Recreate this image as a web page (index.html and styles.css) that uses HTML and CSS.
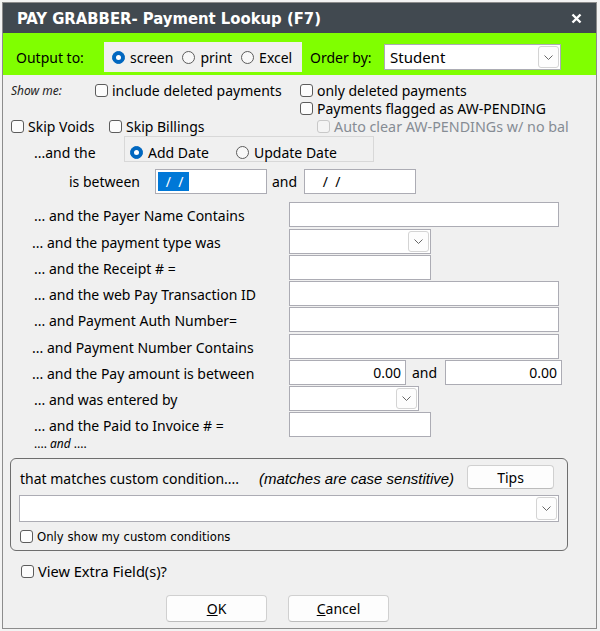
FILE: index.html
```html
<!DOCTYPE html>
<html lang="en">

<head>
    <meta charset="UTF-8">
    <title>Payment Lookup</title>
    <link rel="stylesheet" href="styles.css">
</head>

<body>
    <div class="window">
        <div class="titlebar">
            <span class="title">PAY GRABBER- Payment Lookup (F7)</span>
            <svg class="close" width="11" height="11" viewBox="0 0 11 11">
                <path d="M1.5 1.5l8 8M9.5 1.5l-8 8" stroke="#fff" stroke-width="2.4" />
            </svg>
        </div>

        <div class="greenbar">
            <span class="g-label output-label">Output to:</span>
            <div class="radio-box">
                <label class="radio checked"><span class="dot"></span>screen</label>
                <label class="radio"><span class="dot"></span>print</label>
                <label class="radio"><span class="dot"></span>Excel</label>
            </div>
            <span class="g-label order-label">Order by:</span>
            <div class="select order-select">
                <span class="sel-text">Student</span>
                <span class="dd"><svg width="9" height="5" viewBox="0 0 9 5"><path d="M0.5 0.5l4 4 4-4" fill="none" stroke="#666" /></svg></span>
            </div>
        </div>

        <div class="content">
            <div class="show-grid">
                <div class="show-cell">
                    <span class="show-me">Show me:</span>
                    <label class="chk"><span class="box"></span>include deleted payments</label>
                </div>
                <label class="chk"><span class="box"></span>only deleted payments</label>
                <div></div>
                <label class="chk"><span class="box"></span>Payments flagged as AW-PENDING</label>
                <div class="show-cell">
                    <label class="chk skip-voids"><span class="box"></span>Skip Voids</label>
                    <label class="chk"><span class="box"></span>Skip Billings</label>
                </div>
                <label class="chk disabled indent"><span class="box"></span>Auto clear AW-PENDINGs w/ no bal</label>
            </div>

            <div class="date-type-row">
                <span class="date-label">...and the</span>
                <div class="date-group">
                    <label class="radio checked add-date"><span class="dot"></span>Add Date</label>
                    <label class="radio"><span class="dot"></span>Update Date</label>
                </div>
            </div>

            <div class="between-row">
                <span class="between-label">is between</span>
                <div class="inp date-inp"><span class="selected">&nbsp;/&nbsp;&nbsp;/&nbsp;</span></div>
                <span class="and">and</span>
                <div class="inp date-inp"><span class="date-blank">&nbsp;/&nbsp;&nbsp;/</span></div>
            </div>

            <div class="fields">
                <div class="frow">
                    <span class="flabel">... and the Payer Name Contains</span>
                    <div class="inp long"></div>
                </div>
                <div class="frow plus1">
                    <span class="flabel tight">... and the payment type was</span>
                    <div class="select short">
                        <span class="sel-text"></span>
                        <span class="dd"><svg width="9" height="5" viewBox="0 0 9 5"><path d="M0.5 0.5l4 4 4-4" fill="none" stroke="#666" /></svg></span>
                    </div>
                </div>
                <div class="frow">
                    <span class="flabel">... and the Receipt # =</span>
                    <div class="inp short"></div>
                </div>
                <div class="frow">
                    <span class="flabel">... and the web Pay Transaction ID</span>
                    <div class="inp long"></div>
                </div>
                <div class="frow">
                    <span class="flabel">... and Payment Auth Number=</span>
                    <div class="inp long"></div>
                </div>
                <div class="frow plus1">
                    <span class="flabel tight">... and Payment Number Contains</span>
                    <div class="inp long"></div>
                </div>
                <div class="frow">
                    <span class="flabel tight">... and the Pay amount is between</span>
                    <div class="inp amount">0.00</div>
                    <span class="and amount-and">and</span>
                    <div class="inp amount">0.00</div>
                </div>
                <div class="frow">
                    <span class="flabel">... and was entered by</span>
                    <div class="select entered">
                        <span class="sel-text"></span>
                        <span class="dd"><svg width="9" height="5" viewBox="0 0 9 5"><path d="M0.5 0.5l4 4 4-4" fill="none" stroke="#666" /></svg></span>
                    </div>
                </div>
                <div class="frow">
                    <span class="flabel">... and the Paid to Invoice # =</span>
                    <div class="inp short"></div>
                </div>
                <div class="and-line">.... <em>and</em> ....</div>
            </div>

            <div class="custom-box">
                <div class="custom-head">
                    <span class="custom-title">that matches custom condition....</span>
                    <em class="custom-note">(matches are case senstitive)</em>
                    <button class="btn tips">Tips</button>
                </div>
                <div class="select custom-select">
                    <span class="sel-text"></span>
                    <span class="dd"><svg width="9" height="5" viewBox="0 0 9 5"><path d="M0.5 0.5l4 4 4-4" fill="none" stroke="#666" /></svg></span>
                </div>
                <label class="chk small"><span class="box"></span>Only show my custom conditions</label>
            </div>

            <label class="chk extra"><span class="box"></span>View Extra Field(s)?</label>

            <div class="buttons">
                <button class="btn"><u>O</u>K</button>
                <button class="btn"><u>C</u>ancel</button>
            </div>
        </div>
    </div>
</body>

</html>
```
FILE: styles.css
```css
html,
body {
    margin: 0;
    background: #f3f3f3;
}

.window {
    margin: 2px 0 0 2px;
    width: 595px;
    height: 627px;
    box-sizing: border-box;
    border: 1px solid #8c8c8c;
    background: #f0f0f0;
    font-family: "Noto Sans", sans-serif;
    font-size: 14px;
    color: #000;
    display: flex;
    flex-direction: column;
}

.titlebar {
    height: 30px;
    background: #414950;
    color: white;
    display: flex;
    align-items: center;
    justify-content: space-between;
    padding: 0 14px;
    flex-shrink: 0;
}

.title {
    font-family: "DejaVu Sans Condensed", "DejaVu Sans", sans-serif;
    font-weight: bold;
    font-size: 16.5px;
}

.greenbar {
    height: 42px;
    box-sizing: border-box;
    background: #80ff00;
    display: flex;
    align-items: center;
    padding: 6px 0 0 13px;
    flex-shrink: 0;
}

.g-label {
    display: inline-block;
}

.output-label {
    width: 88px;
}

.order-label {
    width: 74px;
    margin-left: 8px;
}

.radio-box {
    width: 198px;
    height: 30px;
    box-sizing: border-box;
    background: #f0f0f0;
    display: flex;
    align-items: center;
    padding-left: 8px;
    gap: 9px;
}

.radio {
    display: flex;
    align-items: center;
    gap: 5px;
}

.dot {
    width: 13px;
    height: 13px;
    box-sizing: border-box;
    border: 1px solid #5c5c5c;
    border-radius: 50%;
    background: #f8f8f8;
    display: flex;
    align-items: center;
    justify-content: center;
}

.radio.checked .dot {
    border-color: #0067c0;
    background: #0067c0;
}

.radio.checked .dot::after {
    content: "";
    width: 5px;
    height: 5px;
    border-radius: 50%;
    background: white;
}

.select {
    box-sizing: border-box;
    border: 1px solid #acacb4;
    background: white;
    display: flex;
    align-items: stretch;
    justify-content: space-between;
    padding: 1px;
}

.sel-text {
    padding-left: 4px;
    display: flex;
    align-items: center;
}

.dd {
    width: 21px;
    box-sizing: border-box;
    border: 1px solid #d4d4d4;
    border-radius: 3px;
    background: #fdfdfd;
    display: flex;
    align-items: center;
    justify-content: center;
}

.order-select {
    width: 177px;
    height: 26px;
    font-size: 15px;
}

/* show me block */
.content {
    padding: 6px 0 0 0;
}

.show-grid {
    display: grid;
    grid-template-columns: 289px 1fr;
    grid-auto-rows: 18px;
    padding-left: 8px;
}

.show-cell {
    display: flex;
    align-items: center;
}

.show-me {
    font-style: italic;
    font-size: 12px;
    width: 84px;
    color: #222;
}

.chk {
    display: flex;
    align-items: center;
    gap: 4px;
}

.box {
    width: 13px;
    height: 13px;
    box-sizing: border-box;
    border: 1px solid #5c5c5c;
    border-radius: 3px;
    background: #fcfcfc;
    flex-shrink: 0;
}

.skip-voids {
    width: 98px;
}

.chk.disabled {
    color: #868c94;
    font-size: 14.3px;
}

.chk.disabled .box {
    border-color: #c8c8c8;
    background: #f4f4f4;
}

.indent {
    padding-left: 17px;
}

/* date rows */
.date-type-row {
    display: flex;
    align-items: center;
    margin-top: 1px;
    padding-left: 31px;
    height: 26px;
}

.date-label {
    width: 90px;
    padding-top: 6px;
}

.date-group {
    width: 250px;
    height: 26px;
    box-sizing: border-box;
    border: 1px solid #d8d8d8;
    display: flex;
    align-items: center;
    padding: 6px 0 0 5px;
}

.add-date {
    width: 106px;
}

.between-row {
    display: flex;
    align-items: center;
    margin-top: 7px;
    padding-left: 66px;
    height: 25px;
}

.between-label {
    width: 86px;
}

.inp {
    height: 25px;
    box-sizing: border-box;
    border: 1px solid #acacb4;
    background: white;
}

.date-inp {
    width: 112px;
    padding: 2px;
    display: flex;
    align-items: stretch;
}

.selected {
    background: #0078d7;
    color: white;
    padding: 0 2px 0 4px;
    line-height: 19px;
}

.date-blank {
    padding-left: 12px;
    line-height: 19px;
}

.and {
    margin-left: 5px;
    width: 32px;
}

/* field rows */
.fields {
    margin-top: 7px;
    padding-left: 31px;
}

.frow {
    display: flex;
    align-items: center;
    height: 26px;
}

.frow.plus1 {
    margin-top: 1px;
}

.flabel {
    width: 255px;
    padding-top: 2px;
}

.flabel.tight {
    margin-left: -2px;
    width: 257px;
}

.long {
    width: 270px;
}

.short {
    width: 142px;
}

.short.select {
    height: 25px;
}

.entered {
    width: 130px;
    height: 25px;
}

.amount {
    width: 117px;
    text-align: right;
    padding-right: 4px;
    line-height: 23px;
}

.amount-and {
    margin-left: 6px;
    width: 33px;
}

.and-line {
    font-size: 12px;
    line-height: 14px;
}

/* custom condition */
.custom-box {
    margin: 7px 0 0 7px;
    width: 558px;
    height: 93px;
    box-sizing: border-box;
    border: 1px solid #6e6e6e;
    border-radius: 6px;
    padding: 6px 0 0 9px;
}

.custom-head {
    display: flex;
    align-items: center;
    height: 24px;
}

.custom-title {
    width: 239px;
    padding-top: 3px;
}

.custom-note {
    width: 208px;
    font-family: "Liberation Sans", sans-serif;
    font-size: 15px;
    padding-top: 3px;
}

.btn {
    font-family: "Noto Sans", sans-serif;
    font-size: 14px;
    color: #000;
    background: #fdfdfd;
    border: 1px solid #d0d0d0;
    border-bottom-color: #bcbcbc;
    border-radius: 4px;
    padding: 0;
}

.tips {
    width: 87px;
    height: 24px;
}

.custom-select {
    width: 540px;
    height: 27px;
    margin: 6px 0 0 -1px;
}

.chk.small {
    font-family: "DejaVu Sans Condensed", "DejaVu Sans", sans-serif;
    font-size: 13px;
    margin-top: 6px;
    height: 16px;
}

.extra {
    margin: 11px 0 0 18px;
    height: 18px;
    font-size: 14.6px;
}

.buttons {
    display: flex;
    gap: 21px;
    margin: 15px 0 0 163px;
}

.buttons .btn {
    width: 101px;
    height: 27px;
}
```
